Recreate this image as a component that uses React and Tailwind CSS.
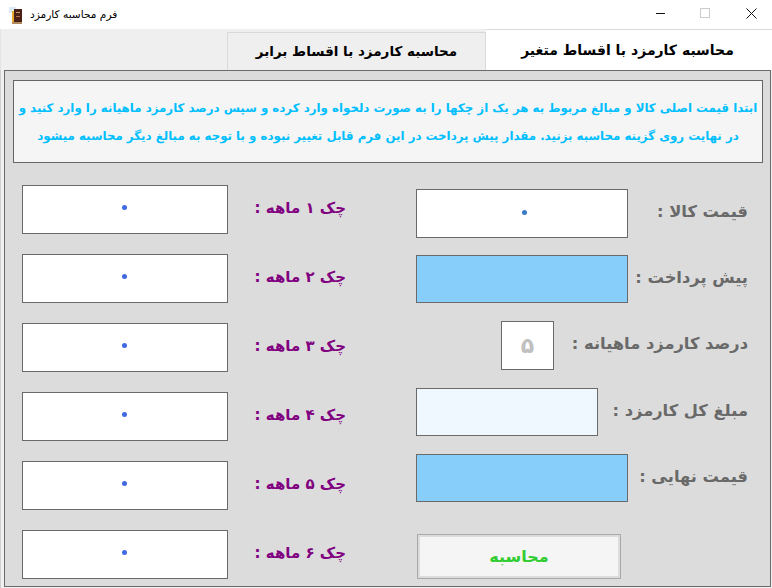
const font = "font-['Tahoma','DejaVu_Sans',sans-serif]";

function Box({ className = "", children }) {
  return (
    <div className={`flex items-center justify-center border border-[#6a6a6a] ${className}`}>
      {children}
    </div>
  );
}

function CheckRow({ label }) {
  return (
    <div className="flex h-[49px] items-center">
      <Box className="h-full w-[206px] bg-white">
        <span className="block h-[5px] w-[5px] -translate-x-px -translate-y-[2px] rounded-full bg-[#4169e1]" />
      </Box>
      <div dir="rtl" className="w-[118px] -translate-y-px text-right text-[15px] font-bold whitespace-nowrap text-[#800080]">{label}</div>
    </div>
  );
}

function Label({ children }) {
  return (
    <div dir="rtl" className="flex-1 -translate-y-px pr-[2px] text-right text-[16.3px] font-bold whitespace-nowrap text-[#696969]">{children}</div>
  );
}

export default function App() {
  return (
    <div dir="ltr" className={`flex h-[588px] w-[772px] flex-col overflow-hidden bg-white ${font}`}>
      <div className="flex h-[29px] shrink-0 items-center">
        <svg width="16" height="18" viewBox="0 0 16 18" className="ml-[9px] shrink-0">
          <rect x="0" y="1" width="7" height="6" fill="#dcecf6" />
          <rect x="5" y="3" width="8" height="15" fill="#4a1f17" />
          <rect x="3" y="5" width="2" height="13" fill="#e8a92e" />
          <rect x="3" y="16" width="10" height="2" fill="#b08a5a" />
          <rect x="7" y="6" width="4" height="1" fill="#c99a6a" />
          <rect x="7" y="10" width="4" height="1" fill="#a9714a" />
        </svg>
        <div dir="rtl" className="ml-[5px] text-[10.6px] whitespace-nowrap text-black">فرم محاسبه کارمزد</div>
        <div className="ml-auto flex h-full items-center">
          <svg width="46" height="29" viewBox="0 0 46 29"><path d="M22 13.5h9" stroke="#111" strokeWidth="1" /></svg>
          <svg width="46" height="29" viewBox="0 0 46 29"><rect x="20.5" y="8.5" width="9" height="9" fill="none" stroke="#ccc" /></svg>
          <svg width="46" height="29" viewBox="0 0 46 29"><path d="M20.5 8.5l10 10M30.5 8.5l-10 10" stroke="#111" strokeWidth="1" /></svg>
        </div>
      </div>

      <div className="flex h-[41px] shrink-0 items-end border-l border-[#e4e4e4] bg-[#efefef]">
        <div className="flex-1" />
        <div dir="rtl" className="flex h-[38px] w-[259px] items-center justify-center border border-b-0 border-[#d9d9d9] bg-[#efefef] text-[13.5px] font-bold whitespace-nowrap text-black">محاسبه کارمزد با اقساط برابر</div>
        <div dir="rtl" className="flex h-[41px] w-[286px] items-center justify-center border-t border-[#d9d9d9] bg-white pr-[3px] text-[14px] font-bold whitespace-nowrap text-black">محاسبه کارمزد با اقساط متغیر</div>
      </div>

      <div className="flex flex-1 flex-col border-l border-[#d0d0d0] bg-[#f0f0f0] pr-px pb-px pl-[3px]">
        <div className="flex flex-1 flex-col border border-[#6a6a6a] bg-[#dcdcdc] pt-[9px] pr-[7px] pl-[8px]">
          <div dir="rtl" className="flex h-[83px] flex-col justify-center border border-[#666] bg-[#f5f5f5] text-center text-[11.8px] leading-[28px] font-bold whitespace-nowrap text-[#00bfff]">
            <div>ابتدا قیمت اصلی کالا و مبالغ مربوط به هر یک از چکها را به صورت دلخواه وارد کرده و سپس درصد کارمزد ماهیانه را وارد کنید و</div>
            <div>در نهایت روی گزینه محاسبه بزنید. مقدار پیش پرداخت در این فرم قابل تغییر نبوده و با توجه به مبالغ دیگر محاسبه میشود</div>
          </div>

          <div className="flex pt-[22px]">
            <div className="ml-[9px] flex w-[324px] flex-col gap-5">
              <CheckRow label="چک ۱ ماهه :" />
              <CheckRow label="چک ۲ ماهه :" />
              <CheckRow label="چک ۳ ماهه :" />
              <CheckRow label="چک ۴ ماهه :" />
              <CheckRow label="چک ۵ ماهه :" />
              <CheckRow label="چک ۶ ماهه :" />
            </div>
            <div className="ml-[70px] flex w-[334px] flex-col pt-1">
              <div className="flex h-[49px] items-center">
                <Box className="h-full w-[212px] bg-white"><span className="ml-1 block h-[5px] w-[5px] -translate-y-px rounded-full bg-[#3a7bc8]" /></Box>
                <Label>قیمت کالا :</Label>
              </div>
              <div className="mt-[17px] flex h-[48px] items-center">
                <Box className="h-full w-[212px] bg-[#87cefa]" />
                <Label>پیش پرداخت :</Label>
              </div>
              <div className="mt-[18px] flex h-[49px] items-center">
                <Box className="ml-[85px] h-full w-[53px] bg-white text-[22px] font-bold text-[#c0c0c0]">۵</Box>
                <Label>درصد کارمزد ماهیانه :</Label>
              </div>
              <div className="mt-[18px] flex h-[48px] items-center">
                <Box className="h-full w-[182px] bg-[#f0f8ff]" />
                <Label>مبلغ کل کارمزد :</Label>
              </div>
              <div className="mt-[18px] flex h-[48px] items-center">
                <Box className="h-full w-[212px] bg-[#87cefa]" />
                <Label>قیمت نهایی :</Label>
              </div>
              <button dir="rtl" className="mt-[32px] ml-px flex h-[45px] w-[204px] items-center justify-center border border-[#a9a9a9] bg-[#f5f5f5] text-[16px] font-bold text-[#32cd32] shadow-[inset_0_0_0_2px_#dcdcdc]">محاسبه</button>
            </div>
          </div>
        </div>
      </div>
    </div>
  );
}
